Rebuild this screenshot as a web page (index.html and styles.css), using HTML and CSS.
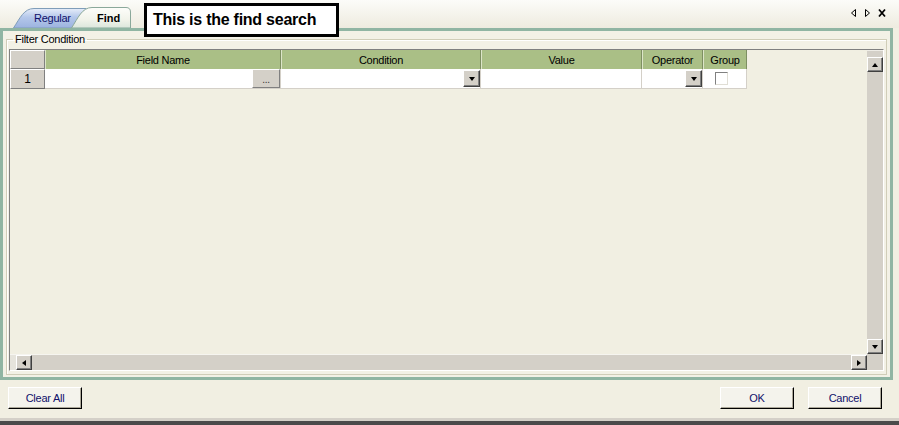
FILE: index.html
```html
<!DOCTYPE html>
<html lang="en">

<head>
  <meta charset="UTF-8" />
  <title>Find</title>
  <link rel="stylesheet" href="styles.css">
</head>

<body>
  <div class="win">
    <!-- 顶部的标签栏 -->
    <div class="tabbar">
      <div class="tabs">
        <svg class="tabs-bg" width="134" height="28" viewBox="0 0 134 28">
          <defs>
            <linearGradient id="gReg" x1="0" y1="0" x2="0" y2="1">
              <stop offset="0" stop-color="#e6edf9" />
              <stop offset="0.45" stop-color="#b4c7ea" />
              <stop offset="1" stop-color="#9cb3df" />
            </linearGradient>
            <linearGradient id="gFind" x1="0" y1="0" x2="0" y2="1">
              <stop offset="0" stop-color="#fdfdfa" />
              <stop offset="0.6" stop-color="#f1f3ea" />
              <stop offset="1" stop-color="#dbe6dc" />
            </linearGradient>
          </defs>
          <path d="M13.5,28 C20,18 24,8.5 34,8.5 L86,8.5 L86,28 Z" fill="url(#gReg)" stroke="#7f9db9" />
          <path d="M71.5,28 C78,18 82,7.5 92,7.5 L126,7.5 Q130.5,7.5 130.5,12 L130.5,28 Z" fill="url(#gFind)" stroke="#8aa89a" />
        </svg>
        <span class="tab-label tab-regular">Regular</span>
        <span class="tab-label tab-find">Find</span>
      </div>
      <div class="nav">
        <svg width="38" height="10" viewBox="0 0 38 10">
          <path d="M5.5,1.5 L1.5,5 L5.5,8.5 Z" fill="none" stroke="#000" />
          <path d="M15.5,1.5 L19.5,5 L15.5,8.5 Z" fill="none" stroke="#000" />
          <path d="M29,1.5 L35,8.5 M35,1.5 L29,8.5" stroke="#000" stroke-width="1.8" />
        </svg>
      </div>
      <!-- 提示框 盖在标签栏上面 -->
      <div class="tip">This is the find search</div>
    </div>

    <!-- 主面板 -->
    <div class="frame">
      <fieldset class="group">
        <legend>Filter Condition</legend>
        <div class="grid">
          <div class="cells">
            <div class="table">
              <div class="hd corner"></div>
              <div class="hd">Field Name</div>
              <div class="hd">Condition</div>
              <div class="hd">Value</div>
              <div class="hd">Operator</div>
              <div class="hd">Group</div>

              <div class="rowhd">1</div>
              <div class="cell"><span class="dots">...</span></div>
              <div class="cell"><span class="drop"><i></i></span></div>
              <div class="cell"></div>
              <div class="cell"><span class="drop"><i></i></span></div>
              <div class="cell check-cell"><span class="check"></span></div>
            </div>
          </div>
          <div class="vscroll">
            <div class="sb-gap"></div>
            <div class="sb-btn"><i class="up"></i></div>
            <div class="sb-track"></div>
            <div class="sb-btn"><i class="down"></i></div>
          </div>
          <div class="hscroll">
            <div class="sb-lead"></div>
            <div class="sb-btn"><i class="left"></i></div>
            <div class="sb-track"></div>
            <div class="sb-btn"><i class="right"></i></div>
          </div>
          <div class="sb-corner"></div>
        </div>
      </fieldset>
    </div>

    <!-- 底部按钮 -->
    <div class="footer">
      <button class="btn">Clear All</button>
      <button class="btn btn-ok">OK</button>
      <button class="btn btn-cancel">Cancel</button>
    </div>
    <div class="edge"></div>
  </div>
</body>

</html>
```

FILE: styles.css
```css
* {
  margin: 0;
  padding: 0;
  box-sizing: border-box;
}

body {
  background: #f1efe2;
  font: 11px "Liberation Sans", Arial, sans-serif;
  letter-spacing: -0.25px;
  color: #000;
}

.win {
  width: 899px;
  height: 425px;
  overflow: hidden;
}

/* 标签栏 */
.tabbar {
  position: relative;
  height: 28px;
  display: flex;
  background: linear-gradient(#fcfcf9, #eeebdf);
}

.tabs {
  position: relative;
  width: 134px;
  height: 28px;
  display: flex;
}

.tabs-bg {
  position: absolute;
  left: 0;
  top: 0;
}

.tab-label {
  position: relative;
  display: inline-block;
  padding-top: 11px;
  line-height: 14px;
  color: #10106a;
}

.tab-regular {
  margin-left: 34px;
  width: 63px;
}

.tab-find {
  font-weight: bold;
  color: #000;
  letter-spacing: 0;
}

.nav {
  margin-left: auto;
  padding: 8px 11px 0 0;
}

.nav svg {
  display: block;
}

.tip {
  position: absolute;
  left: 144px;
  top: 3px;
  width: 195px;
  height: 34px;
  border: 3px solid #000;
  background: #fff;
  padding-left: 6px;
  font: bold 16px/27px "Liberation Sans", Arial, sans-serif;
  letter-spacing: -0.25px;
  z-index: 2;
}

/* 主面板 */
.frame {
  width: 893px;
  height: 352px;
  border: 3px solid #90b5a3;
  background: #f3f1e6;
  padding: 2px 3px 0 3px;
}

.group {
  border: 1px solid #d0cdb8;
  box-shadow: inset 1px 1px 0 #fff;
  padding: 3px 2px 2px 2px;
  height: 342px;
}

.group legend {
  margin-left: 4px;
  padding: 0 2px;
  line-height: 13px;
  color: #000;
}

.grid {
  height: 322px;
  border: 1px solid;
  border-color: #808080 #fff #fff #808080;
  display: grid;
  grid-template-columns: 1fr 16px;
  grid-template-rows: 1fr 16px;
}

.cells {
  overflow: hidden;
  background: #f1efe2;
}

.table {
  display: grid;
  grid-template-columns: 35px 236px 200px 161px 61px 44px;
  grid-template-rows: 19px 20px;
  width: 737px;
}

.hd {
  background: #aabf86;
  border-right: 1px solid #7e8f62;
  border-left: 1px solid #dce5c8;
  text-align: center;
  padding-top: 1px;
  line-height: 18px;
}

.hd.corner {
  background: #d4d0c8;
  border-left: 1px solid #fff;
  border-right: 1px solid #808080;
  border-bottom: 1px solid #808080;
  border-top: 1px solid #fff;
}

.rowhd {
  background: #d4d0c8;
  border-left: 1px solid #fff;
  border-top: 1px solid #fff;
  border-right: 1px solid #808080;
  border-bottom: 1px solid #808080;
  text-align: center;
  padding-top: 1px;
  line-height: 17px;
  font-size: 12px;
}

.cell {
  background: #fff;
  border-right: 1px solid #d4d0c8;
  border-bottom: 1px solid #d4d0c8;
  display: flex;
  justify-content: flex-end;
  align-items: stretch;
}

.dots {
  width: 28px;
  background: #d4d0c8;
  border: 1px solid;
  border-color: #fff #808080 #808080 #fff;
  text-align: center;
  line-height: 20px;
  font-size: 10px;
  color: #333;
}

.drop {
  width: 17px;
  margin: 1px 0;
  background: #d4d0c8;
  border: 1px solid;
  border-color: #fff #404040 #404040 #fff;
  box-shadow: inset -1px -1px 0 #808080;
  display: flex;
  align-items: center;
  justify-content: center;
}

.drop i,
.sb-btn i {
  width: 0;
  height: 0;
  border-left: 3.5px solid transparent;
  border-right: 3.5px solid transparent;
  border-top: 4px solid #000;
}

.check-cell {
  justify-content: flex-start;
  align-items: flex-start;
  padding: 3px 0 0 12px;
}

.check {
  width: 13px;
  height: 13px;
  background: #fff;
  border: 1px solid;
  border-color: #808080 #e0ded5 #e0ded5 #808080;
}

/* 滚动条 */
.vscroll {
  display: flex;
  flex-direction: column;
  background: #d4d0c8;
}

.sb-gap {
  height: 7px;
  border-top: 1px solid #eeece6;
}

.sb-track {
  flex: 1;
  background: #d4d0c8;
}

.sb-btn {
  width: 16px;
  height: 15px;
  background: #d4d0c8;
  border: 1px solid;
  border-color: #fff #404040 #404040 #fff;
  box-shadow: inset -1px -1px 0 #808080;
  display: flex;
  align-items: center;
  justify-content: center;
}

.sb-btn i.up {
  border-top: 0;
  border-bottom: 4px solid #000;
}

.sb-btn i.left {
  border-top: 3.5px solid transparent;
  border-bottom: 3.5px solid transparent;
  border-left: 0;
  border-right: 4px solid #000;
}

.sb-btn i.right {
  border-top: 3.5px solid transparent;
  border-bottom: 3.5px solid transparent;
  border-right: 0;
  border-left: 4px solid #000;
}

.hscroll {
  display: flex;
  background: #d4d0c8;
  border-top: 1px solid #f6f5f0;
}

.hscroll .sb-btn {
  height: 15px;
}

.sb-lead {
  width: 6px;
  background: #e6e4dc;
}

.sb-corner {
  background: #d4d0c8;
}

/* 底部按钮 */
.footer {
  height: 38px;
  display: flex;
  padding: 7px 17px 0 8px;
}

.btn {
  width: 74px;
  height: 22px;
  background: #f4f3ec;
  border: 1px solid;
  border-color: #fff #000 #000 #fff;
  box-shadow: inset -1px -1px 0 #aca899;
  font: 11px "Liberation Sans", Arial, sans-serif;
  letter-spacing: -0.25px;
  color: #10106a;
}

.btn-ok {
  margin-left: auto;
}

.btn-cancel {
  margin-left: 14px;
}

.edge {
  height: 7px;
  border-top: 3px solid #d4d0c8;
  background: #4a4a4a;
}
```
